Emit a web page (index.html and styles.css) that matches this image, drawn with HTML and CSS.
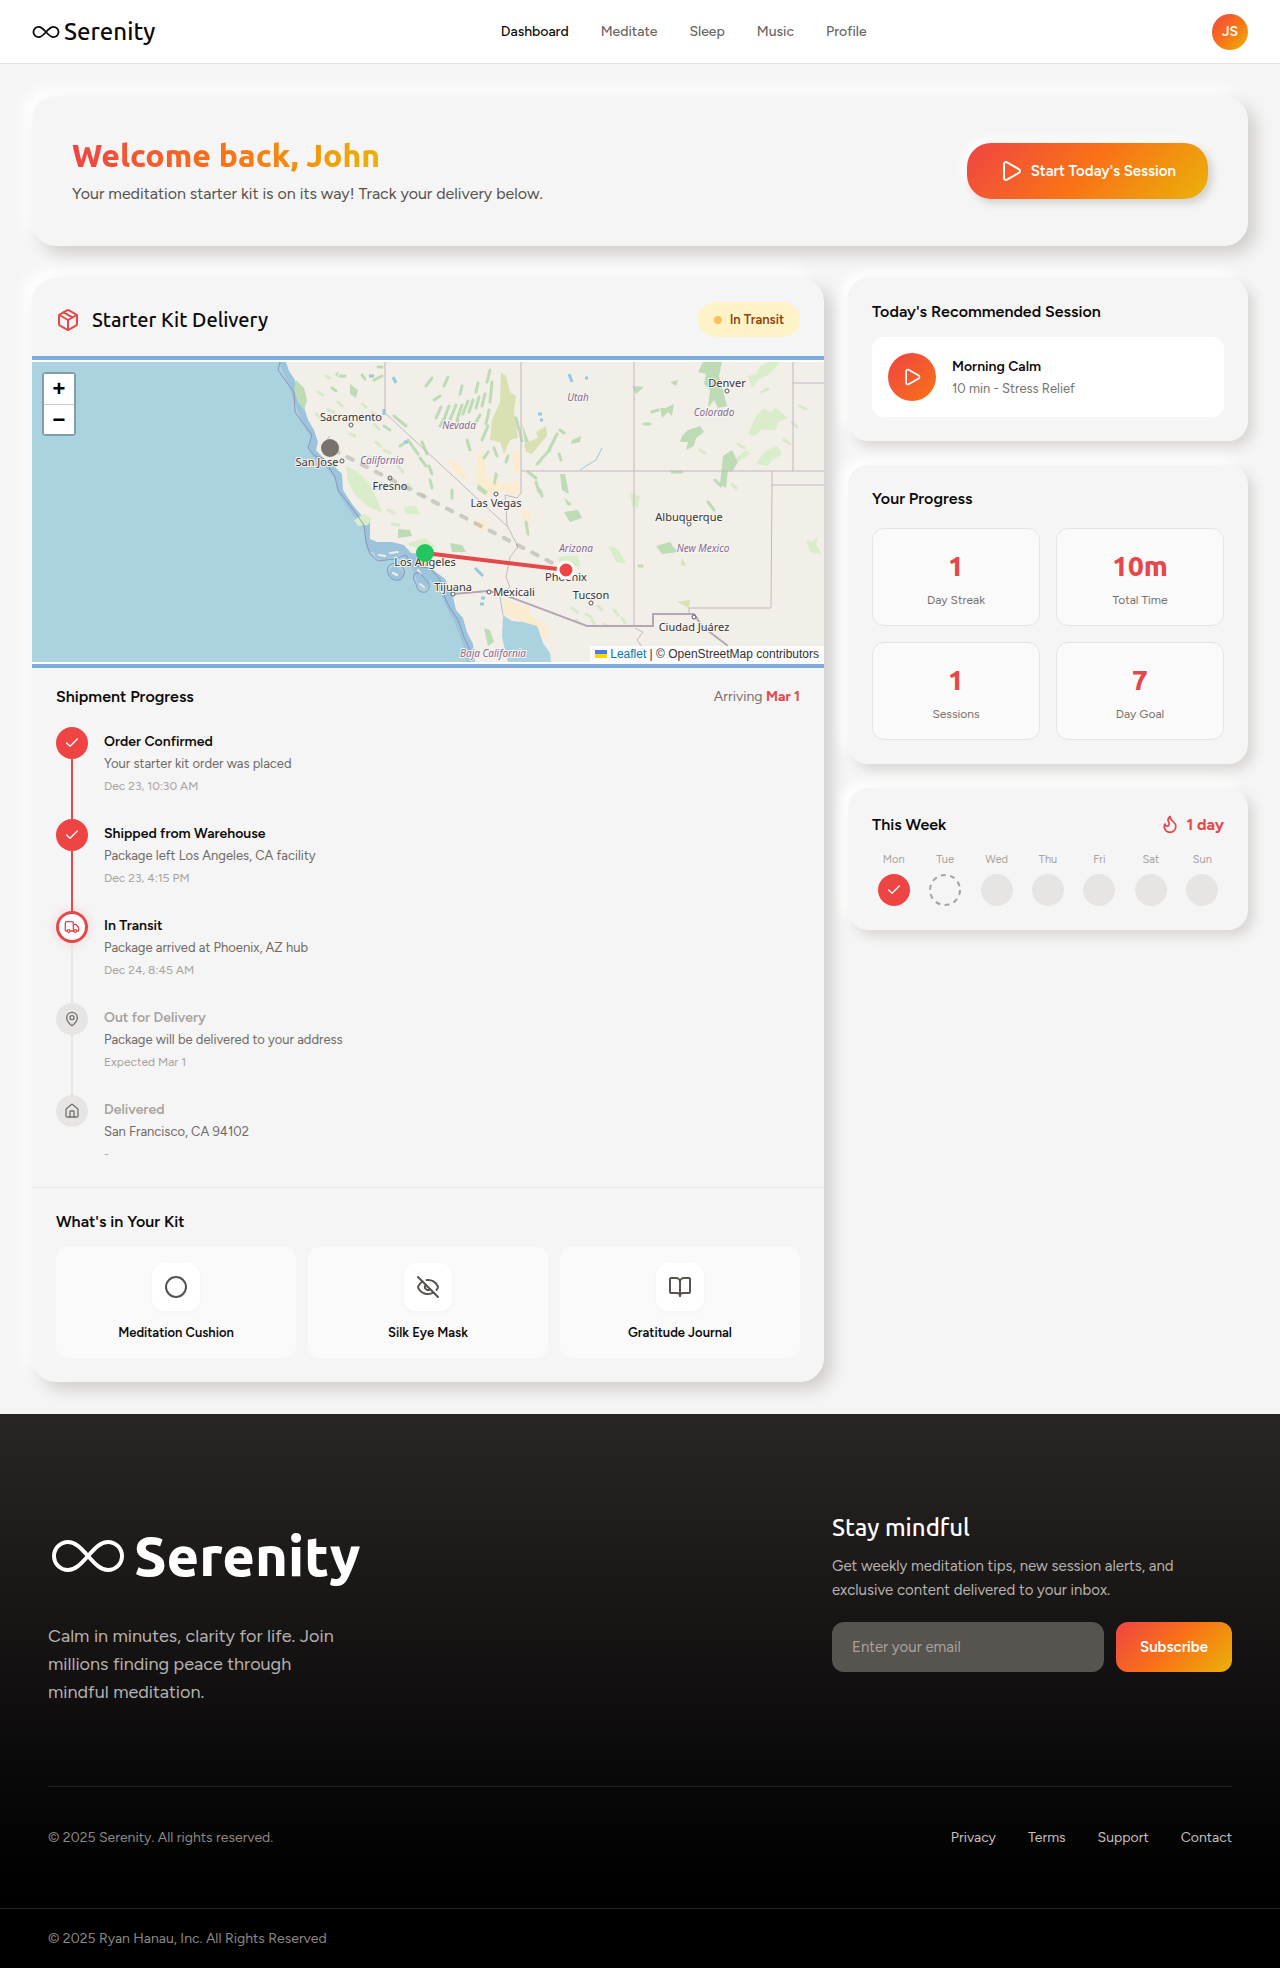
FILE: index.html
```html
<!DOCTYPE html>
<html lang="en">
<head>
    <meta charset="UTF-8">
    <meta name="viewport" content="width=device-width, initial-scale=1.0">
    <title>Serenity - Dashboard</title>
    <link rel="stylesheet" href="styles.css">
</head>
<body>
    <header class="navbar">
        <a class="logo" href="#">
            <svg class="logo-icon" viewBox="-2 0 76 38" aria-hidden="true"><path d="M36 19C28 10 23 5 16 5A14 14 0 0 0 16 33C23 33 28 28 36 19S49 5 56 5A14 14 0 0 1 56 33C49 33 44 28 36 19Z"/></svg>
            <span>Serenity</span>
        </a>
        <nav class="nav-links">
            <a class="active" href="#">Dashboard</a>
            <a href="#">Meditate</a>
            <a href="#">Sleep</a>
            <a href="#">Music</a>
            <a href="#">Profile</a>
        </nav>
        <button class="avatar" type="button">JS</button>
    </header>

    <main class="dashboard">
        <section class="hero">
            <div>
                <h1>Welcome back, John</h1>
                <p>Your meditation starter kit is on its way! Track your delivery below.</p>
            </div>
            <button class="start-btn" type="button">
                <svg class="icon icon-24" viewBox="0 0 24 24" aria-hidden="true"><path d="M5 5a2 2 0 0 1 3.008-1.728l11.997 6.998a2 2 0 0 1 .003 3.458l-12 7A2 2 0 0 1 5 19z"/></svg>
                Start Today's Session
            </button>
        </section>

        <div class="columns">
            <section class="card delivery">
                <div class="delivery-header">
                    <svg class="icon icon-24 red" viewBox="0 0 24 24" aria-hidden="true"><path d="M11 21.73a2 2 0 0 0 2 0l7-4A2 2 0 0 0 21 16V8a2 2 0 0 0-1-1.73l-7-4a2 2 0 0 0-2 0l-7 4A2 2 0 0 0 3 8v8a2 2 0 0 0 1 1.73z"/><path d="M12 22V12"/><path d="M3.3 7 12 12l8.700-5"/><path d="m7.500 4.270 9 5.150"/></svg>
                    <h2>Starter Kit Delivery</h2>
                    <span class="status"><i class="status-dot"></i>In Transit</span>
                </div>

                <div class="map">
                    <svg class="map-canvas" viewBox="0 0 792 300" preserveAspectRatio="xMinYMin slice" role="img" aria-label="Delivery route map">
                        <rect class="water" width="792" height="300"/>
                        <path class="shore" d="M254 0 L261 18 268 38 275 56 285 75 283 88 300 103 310 116 311 128 328 153 338 165 340 184 372 186 386 205 401 212 411 222 419 240 428 258 436 278 441 300"/>
                        <path class="isle-shore" d="M349 192 L366 188 M363 211 L366 213 M388 210 L392 220"/>
                        <path class="land" d="M254 0 L257 9 263 18 266 32 272 45 276 58 282 68 286 80 284 88 292 97 302 104 310 112 311 128 320 142 330 154 338 160 338 177 345 180 360 180 372 183 379 191 391 192 400 207 413 217 421 235 424 248 431 256 435 270 441 282 443 300 476 300 473 288 470 275 471 253 480 259 488 260 492 256 499 262 505 263 508 272 511 281 518 291 519 300 792 300 792 0 Z"/>
                        <path class="isle" d="M347 193 l6 1 M358 191 l8 -1 M361 211 l4 2 M386 208 l3 4 M388 222 l4 3"/>

                        <!-- dry farmland -->
                        <g class="sand">
                            <path d="M471 236 L480 240 497 245 498 253 512 262 517 270 513 279 505 264 488 259 472 251Z"/>
                            <path d="M446 92 L452 86 454 115 470 122 486 118 488 132 478 133 470 128 452 136 444 120Z"/>
                            <path d="M490 145 L499 151 497 165 491 158Z M414 95 L430 105 436 118 424 112Z M440 160 L458 158 450 172Z M480 88 L488 92 488 112 482 110Z"/>
                        </g>

                        <!-- forests and parks -->
                        <g class="park-light">
                            <path d="M314 104 L326 110 338 122 346 140 350 150 338 146 324 134 316 120Z"/>
                            <path d="M322 158 L332 152 340 156 336 163 326 164Z M372 145 L384 144 388 152 374 152Z M374 182 L392 176 404 184 394 190Z"/>
                            <path d="M724 54 L732 46 738 50 744 46 756 56 746 60 744 68 730 68 722 74 716 72Z M728 96 L734 88 746 84 750 92 740 98 736 104 724 102Z M704 96 L714 88 718 92 706 100Z M716 14 L724 12 728 4 738 0 748 0 738 12 726 18 720 26Z"/>
                            <path d="M576 184 L584 186 588 190 594 202 584 200Z M774 178 L780 180 786 174 784 182 790 192 778 190Z M526 195 L546 193 548 205 528 203Z M598 130 L608 134 606 146 600 144Z"/>
                        </g>
                        <g class="park-olive">
                            <path d="M469 10 L474 14 478 30 484 34 482 50 486 76 478 78 472 92 468 80 458 78 460 58 468 40Z"/>
                            <path d="M492 82 L506 76 504 70 514 64 515 74 508 82 500 92 494 90Z M645 240 L658 238 657 246Z M650 196 l4 8 -5 -1Z"/>
                        </g>
                        <g class="park">
                            <path d="M264 18 L272 26 275 38 272 48 266 40 262 28Z"/>
                            <path d="M671 0 L690 0 687 14 691 28 695 44 686 46 682 38 676 46 678 28 672 22 674 12 666 10Z M628 46 L634 46 642 42 640 54 636 50 630 56Z M650 74 L656 68 668 64 672 70 664 76 662 84 654 88 656 80 648 80Z"/>
                            <path d="M691 94 L700 88 706 100 700 110 696 108 694 126 688 122Z M624 184 L638 180 642 186 648 190 630 192Z M532 150 L546 148 550 156 538 160Z M528 112 L533 112 537 132 530 128Z M532 136 l8 6 -4 2Z"/>
                            <path d="M366 167 L378 168 380 174 366 176Z M418 181 L430 183 434 190 420 190Z M452 266 L458 268 462 280 456 284Z M318 22 L326 28 324 36 318 32Z M303 12 l4 -3 -2 6Z M600 24 l12 1 -8 7Z M638 20 l8 -2 -2 6Z"/>
                            <path d="M446 122 l10 8 -3 3 -8 -6Z M463 110 l3 2 -3 12 -2 -3Z M490 62 l7 18 -4 1Z M540 78 l9 -4 -1 6 -9 2Z"/>
                        </g>
                        <g class="ridges light">
                            <path d="M286 30 l5 3 M296 48 l6 2 M306 40 l4 4 M330 42 l4 3 M342 62 l5 5 M352 88 l6 3 M344 80 l4 4 M366 104 l5 6 M376 122 l4 5 M340 50 l5 3 M294 14 l4 2 M284 52 l5 5 M318 72 l5 2 M334 94 l5 2 M356 148 l6 3 M360 162 l7 1 M390 132 l4 3"/>
                            <path d="M540 246 l5 4 M554 252 l5 3 M566 244 l4 4 M582 248 l4 5 M590 256 l3 5 M572 262 l4 2 M560 258 l3 5 M544 258 l3 3 M700 122 l4 4 M760 60 l5 5 M768 44 l6 3 M730 30 l6 -3 M752 78 l6 4 M706 82 l6 4 M668 88 l5 3"/>
                        </g>
                        <g class="ridges">
                            <path d="M404 56 l5 -11 M411 60 l6 -16 M418 58 l6 -15 M425 58 l5 -15 M431 52 l5 -13 M437 50 l4 -12 M444 46 l3 -11 M443 62 l5 -9 M394 24 l6 -8 M402 38 l6 -4 M455 20 l3 -12 M458 40 l2 -20 M450 78 l6 -14 M462 86 l3 8 M435 78 l3 10 M428 32 l2 -8"/>
                            <path d="M408 64 l4 -7 M422 66 l4 -8 M450 44 l3 -12 M454 62 l3 -14 M444 30 l2 -9 M412 24 l4 -9 M484 56 l3 12 M488 70 l2 9 M452 96 l4 -6 M474 100 l2 -6"/>
                            <path d="M390 80 l5 12 M388 96 l6 8 M397 104 l3 8 M398 118 l2 8 M420 128 v8 M362 54 l12 10 M352 64 l6 4 M376 78 l10 14 M368 84 l6 -4 M342 18 l8 -4 M300 26 l4 3 M308 14 h5 M346 5 h4 M330 13 l3 4"/>
                            <path d="M517 88 l8 -16 M510 96 l8 -8 M527 92 l2 6 M505 102 l4 -4 M528 68 l4 3 M496 110 l8 6 M508 128 l2 6 M504 120 l3 10 M494 160 l2 12 M612 62 h6 M620 50 l6 -2 M676 140 l6 8 M683 118 l6 6 M640 110 h10 M607 204 h3"/>
                        </g>
                        <g class="lakes">
                            <path d="M537 12 l3 8 M553 16 h3 M361 15 l3 6 M352 47 v6 M372 80 h4 M506 52 h4 M508 58 h3 M443 206 l8 8 M449 236 h4 M448 242 h4 M337 14 h5"/>
                            <path class="river" d="M570 86 l-6 12 -10 6 -6 4 M298 74 l-6 8"/>
                        </g>

                        <!-- borders -->
                        <g class="borders">
                            <path d="M353 0 V51 L476 165 M489 0 V131 L485 136 473 133 474 145 475 163 486 185 478 195 474 215 478 225 468 235 471 253"/>
                            <path d="M489 109 H792 M602 0 V264 M761 0 V109 M761 21 H792 M740 109 V123 H792 M740 123 L739 246 H657 V252"/>
                            <path d="M603 266 l8 4 -6 8 6 8 -4 14"/>
                        </g>
                        <path class="country" d="M421 232 L456 229 470 232 555 264 H621 V252 H662 L670 264 696 284"/>
                        <path class="maritime" d="M248 0 L246 8 256 22 262 30 263 50 270 60 280 73 276 86 283 94 291 96 303 115 306 128 320 146 332 163 334 180 338 192 346 199 362 197 374 193 380 204 398 206 408 218 413 236 418 246 426 258 432 275 438 288"/>
                        <path class="maritime" d="M356 205 q4 -6 12 -2 q6 4 4 10 q-4 8 -12 4 q-6 -5 -4 -12Z M382 212 q6 -4 10 4 q10 8 2 14 q-8 2 -10 -8 q-4 -5 -2 -10Z"/>

                        <g class="towns">
                            <circle cx="319" cy="63" r="2"/>
                            <circle cx="310" cy="99" r="2"/>
                            <circle cx="358" cy="116" r="2"/>
                            <circle cx="464" cy="132" r="2"/>
                            <circle cx="421" cy="232" r="2"/>
                            <circle cx="457" cy="230" r="2"/>
                            <circle cx="695" cy="29" r="2"/>
                            <circle cx="657" cy="162" r="2"/>
                            <circle cx="559" cy="241" r="2"/>
                            <circle cx="662" cy="255" r="2"/>
                        </g>
                        <g class="city-names">
                            <text x="319" y="59">Sacramento</text>
                            <text x="285" y="104">San Jose</text>
                            <text x="358" y="128">Fresno</text>
                            <text x="464" y="145">Las Vegas</text>
                            <text x="393" y="204">Los Angeles</text>
                            <text x="421" y="229">Tijuana</text>
                            <text x="482" y="234">Mexicali</text>
                            <text x="534" y="219">Phoenix</text>
                            <text x="559" y="237">Tucson</text>
                            <text x="695" y="25">Denver</text>
                            <text x="657" y="159">Albuquerque</text>
                            <text x="662" y="269">Ciudad Juárez</text>
                        </g>
                        <g class="state-names">
                            <text x="350" y="102">California</text>
                            <text x="427" y="67">Nevada</text>
                            <text x="546" y="39">Utah</text>
                            <text x="682" y="54">Colorado</text>
                            <text x="544" y="190">Arizona</text>
                            <text x="671" y="190">New Mexico</text>
                            <text x="461" y="295">Baja California</text>
                        </g>

                        <!-- route and stops -->
                        <path class="route-left" d="M534 208 L298 86"/>
                        <path class="route-done" d="M393 191 L534 208"/>
                        <circle class="stop-home" cx="298" cy="86" r="9"/>
                        <circle class="stop-origin" cx="393" cy="191" r="9"/>
                        <circle class="stop-now" cx="534" cy="208" r="8"/>
                    </svg>
                    <div class="zoom-control">
                        <button type="button" aria-label="Zoom in">+</button>
                        <button type="button" aria-label="Zoom out">−</button>
                    </div>
                    <div class="attribution">
                        <svg class="flag" viewBox="0 0 12 8" aria-hidden="true"><path fill="#4c7be1" d="M0 0h12v4H0z"/><path fill="#ffd500" d="M0 4h12v4H0z"/></svg>
                        <a href="#">Leaflet</a> | © OpenStreetMap contributors
                    </div>
                </div>

                <div class="shipment">
                    <div class="shipment-header">
                        <h3>Shipment Progress</h3>
                        <p>Arriving <strong>Mar 1</strong></p>
                    </div>
                    <ol class="timeline">
                        <li class="step done">
                            <span class="node"><svg class="icon icon-16" viewBox="0 0 24 24" aria-hidden="true"><path d="M20 6 9 17l-5-5"/></svg></span>
                            <div>
                                <h4>Order Confirmed</h4>
                                <p>Your starter kit order was placed</p>
                                <time>Dec 23, 10:30 AM</time>
                            </div>
                        </li>
                        <li class="step done">
                            <span class="node"><svg class="icon icon-16" viewBox="0 0 24 24" aria-hidden="true"><path d="M20 6 9 17l-5-5"/></svg></span>
                            <div>
                                <h4>Shipped from Warehouse</h4>
                                <p>Package left Los Angeles, CA facility</p>
                                <time>Dec 23, 4:15 PM</time>
                            </div>
                        </li>
                        <li class="step current">
                            <span class="node"><svg class="icon icon-16" viewBox="0 0 24 24" aria-hidden="true"><path d="M14 18V6a2 2 0 0 0-2-2H4a2 2 0 0 0-2 2v11a1 1 0 0 0 1 1h2"/><path d="M15 18H9"/><path d="M19 18h2a1 1 0 0 0 1-1v-3.650a1 1 0 0 0-.22-.624l-3.480-4.350A1 1 0 0 0 17.520 8H14"/><circle cx="17" cy="18" r="2"/><circle cx="7" cy="18" r="2"/></svg></span>
                            <div>
                                <h4>In Transit</h4>
                                <p>Package arrived at Phoenix, AZ hub</p>
                                <time>Dec 24, 8:45 AM</time>
                            </div>
                        </li>
                        <li class="step pending">
                            <span class="node"><svg class="icon icon-16" viewBox="0 0 24 24" aria-hidden="true"><path d="M20 10c0 4.993-5.539 10.193-7.399 11.799a1 1 0 0 1-1.202 0C9.539 20.193 4 14.993 4 10a8 8 0 0 1 16 0"/><circle cx="12" cy="10" r="3"/></svg></span>
                            <div>
                                <h4>Out for Delivery</h4>
                                <p>Package will be delivered to your address</p>
                                <time>Expected Mar 1</time>
                            </div>
                        </li>
                        <li class="step pending">
                            <span class="node"><svg class="icon icon-16" viewBox="0 0 24 24" aria-hidden="true"><path d="M15 21v-8a1 1 0 0 0-1-1h-4a1 1 0 0 0-1 1v8"/><path d="M3 10a2 2 0 0 1 .709-1.528l7-5.999a2 2 0 0 1 2.582 0l7 5.999A2 2 0 0 1 21 10v9a2 2 0 0 1-2 2H5a2 2 0 0 1-2-2z"/></svg></span>
                            <div>
                                <h4>Delivered</h4>
                                <p>San Francisco, CA 94102</p>
                                <time>-</time>
                            </div>
                        </li>
                    </ol>
                </div>

                <div class="kit">
                    <h3>What's in Your Kit</h3>
                    <ul class="kit-items">
                        <li>
                            <span class="kit-icon"><svg class="icon icon-24" viewBox="0 0 24 24" aria-hidden="true"><circle cx="12" cy="12" r="10"/></svg></span>
                            Meditation Cushion
                        </li>
                        <li>
                            <span class="kit-icon"><svg class="icon icon-24" viewBox="0 0 24 24" aria-hidden="true"><path d="M10.733 5.076a10.744 10.744 0 0 1 11.205 6.575 1 1 0 0 1 0 .696 10.747 10.747 0 0 1-1.444 2.490"/><path d="M14.084 14.158a3 3 0 0 1-4.242-4.242"/><path d="M17.479 17.499a10.750 10.750 0 0 1-15.417-5.151 1 1 0 0 1 0-.696 10.750 10.750 0 0 1 4.446-5.143"/><path d="m2 2 20 20"/></svg></span>
                            Silk Eye Mask
                        </li>
                        <li>
                            <span class="kit-icon"><svg class="icon icon-24" viewBox="0 0 24 24" aria-hidden="true"><path d="M12 7v14"/><path d="M3 18a1 1 0 0 1-1-1V4a1 1 0 0 1 1-1h5a4 4 0 0 1 4 4 4 4 0 0 1 4-4h5a1 1 0 0 1 1 1v13a1 1 0 0 1-1 1h-6a3 3 0 0 0-3 3 3 3 0 0 0-3-3z"/></svg></span>
                            Gratitude Journal
                        </li>
                    </ul>
                </div>
            </section>

            <aside class="sidebar">
                <section class="card side-card">
                    <h3>Today's Recommended Session</h3>
                    <div class="session">
                        <button class="play-btn" type="button" aria-label="Play Morning Calm"><svg class="icon icon-20" viewBox="0 0 24 24" aria-hidden="true"><path d="M5 5a2 2 0 0 1 3.008-1.728l11.997 6.998a2 2 0 0 1 .003 3.458l-12 7A2 2 0 0 1 5 19z"/></svg></button>
                        <div class="session-info">
                            <h4>Morning Calm</h4>
                            <p>10 min - Stress Relief</p>
                        </div>
                    </div>
                </section>

                <section class="card side-card progress">
                    <h3>Your Progress</h3>
                    <div class="stats">
                        <div class="stat"><strong>1</strong><span>Day Streak</span></div>
                        <div class="stat"><strong>10m</strong><span>Total Time</span></div>
                        <div class="stat"><strong>1</strong><span>Sessions</span></div>
                        <div class="stat"><strong>7</strong><span>Day Goal</span></div>
                    </div>
                </section>

                <section class="card side-card">
                    <div class="week-header">
                        <h3>This Week</h3>
                        <span class="streak">
                            <svg class="icon icon-20" viewBox="0 0 24 24" aria-hidden="true"><path d="M8.500 14.500A2.500 2.500 0 0 0 11 12c0-1.380-.5-2-1-3-1.072-2.143-.224-4.054 2-6 .5 2.500 2 4.900 4 6.500 2 1.600 3 3.500 3 5.500a7 7 0 1 1-14 0c0-1.153.433-2.294 1-3a2.500 2.500 0 0 0 2.500 2.500z"/></svg>
                            1 day
                        </span>
                    </div>
                    <ul class="week">
                        <li>Mon<span class="day complete"><svg class="icon icon-16" viewBox="0 0 24 24" aria-hidden="true"><path d="M20 6 9 17l-5-5"/></svg></span></li>
                        <li>Tue<span class="day today"><svg class="ring" viewBox="0 0 32 32" aria-hidden="true"><circle cx="16" cy="16" r="15"/></svg></span></li>
                        <li>Wed<span class="day"></span></li>
                        <li>Thu<span class="day"></span></li>
                        <li>Fri<span class="day"></span></li>
                        <li>Sat<span class="day"></span></li>
                        <li>Sun<span class="day"></span></li>
                    </ul>
                </section>
            </aside>
        </div>
    </main>

    <footer class="footer">
        <div class="footer-main">
            <div class="footer-top">
                <div class="footer-brand">
                    <a class="footer-logo" href="#">
                        <svg class="footer-logo-icon" viewBox="-4 -1 80 40" aria-hidden="true"><path d="M36 19C28 10 23 5 16 5A14 14 0 0 0 16 33C23 33 28 28 36 19S49 5 56 5A14 14 0 0 1 56 33C49 33 44 28 36 19Z"/></svg>
                        <span>Serenity</span>
                    </a>
                    <p>Calm in minutes, clarity for life. Join millions finding peace through mindful meditation.</p>
                </div>
                <form class="newsletter">
                    <h2>Stay mindful</h2>
                    <p>Get weekly meditation tips, new session alerts, and exclusive content delivered to your inbox.</p>
                    <div class="newsletter-row">
                        <input type="email" placeholder="Enter your email" aria-label="Email address">
                        <button type="button">Subscribe</button>
                    </div>
                </form>
            </div>
            <div class="footer-bottom">
                <p>© 2025 Serenity. All rights reserved.</p>
                <nav class="footer-links">
                    <a href="#">Privacy</a>
                    <a href="#">Terms</a>
                    <a href="#">Support</a>
                    <a href="#">Contact</a>
                </nav>
            </div>
        </div>
        <div class="copyright">© 2025 Ryan Hanau, Inc. All Rights Reserved</div>
    </footer>
</body>
</html>
```
FILE: styles.css
```css
* {
    box-sizing: border-box;
}
body {
    margin: 0;
    background: #f5f5f5;
    color: #0c0a09;
    font-family: Figtree, Lato, sans-serif;
    font-size: 16px;
}
h1, h2, h3, h4, p, ul, ol {
    margin: 0;
    padding: 0;
}
ul, ol {
    list-style: none;
}
a {
    color: inherit;
    text-decoration: none;
}
button, input {
    font-family: inherit;
    border: none;
}
button {
    cursor: pointer;
}
h1, h2, .logo, .footer-logo, .stat strong {
    font-family: Ubuntu, "Noto Sans", sans-serif;
}
h3 {
    font-size: 16px;
    line-height: 19px;
    font-weight: 600;
}
h4 {
    font-size: 14px;
    line-height: 20px;
    font-weight: 600;
}

/* icons */
.icon {
    flex: none;
    fill: none;
    stroke: currentColor;
    stroke-width: 2;
    stroke-linecap: round;
    stroke-linejoin: round;
}
.icon-16 { width: 16px; height: 16px; }
.icon-20 { width: 20px; height: 20px; }
.icon-24 { width: 24px; height: 24px; }
.red { color: #e5484a; }

/* navbar */
.navbar {
    display: flex;
    align-items: center;
    justify-content: space-between;
    height: 64px;
    padding: 0 32px;
    background: #fff;
    border-bottom: 1px solid #e2e2e2;
}
.logo {
    display: flex;
    align-items: center;
    gap: 4px;
    font-size: 24px;
    line-height: 32px;
    font-weight: 500;
}
.logo-icon {
    width: 28px;
    height: 14px;
    fill: none;
    stroke: currentColor;
    stroke-width: 5;
}
.nav-links {
    display: flex;
    gap: 32px;
    font-size: 14px;
    font-weight: 500;
    color: #6b6763;
}
.nav-links .active {
    color: #0c0a09;
}
.avatar {
    width: 36px;
    height: 36px;
    padding: 0;
    border-radius: 50%;
    background: linear-gradient(135deg, #ef4444, #f97316 50%, #eab308);
    color: #fff;
    font-size: 14px;
    font-weight: 600;
}

/* cards */
.dashboard {
    padding: 32px;
}
.hero, .card {
    background: #f5f5f5;
    box-shadow: 8px 8px 16px #d1cfcd, -8px -8px 16px #fff;
}
.hero {
    display: flex;
    align-items: center;
    justify-content: space-between;
    height: 150px;
    padding: 0 40px;
    margin-bottom: 32px;
    border-radius: 24px;
}
.hero h1 {
    width: fit-content;
    font-size: 32px;
    line-height: 38px;
    font-weight: 800;
    background: linear-gradient(90deg, #ef4444, #f97316 50%, #eab308);
    background-clip: text;
    -webkit-background-clip: text;
    color: transparent;
}
.hero p {
    margin-top: 8px;
    line-height: 24px;
    color: #57534e;
}
.start-btn {
    display: flex;
    align-items: center;
    gap: 8px;
    height: 56px;
    padding: 0 32px;
    border-radius: 24px;
    background: linear-gradient(135deg, #ef4444, #f97316 50%, #eab308);
    box-shadow: 4px 4px 8px #d1cfcd, -4px -4px 8px #fff;
    color: #fff;
    font-size: 15px;
    font-weight: 600;
}
.columns {
    display: grid;
    grid-template-columns: minmax(0, 1fr) 400px;
    gap: 24px;
    align-items: start;
}
.card {
    border-radius: 20px;
}
.delivery {
    overflow: hidden;
    border-radius: 24px;
}
.delivery-header {
    display: flex;
    align-items: center;
    gap: 12px;
    padding: 24px;
    border-bottom: 1px solid #e7e5e4;
}
.delivery-header h2 {
    flex: 1;
    font-size: 20px;
    line-height: 24px;
    font-weight: 500;
}
.status {
    display: flex;
    align-items: center;
    gap: 8px;
    height: 35px;
    padding: 0 16px;
    border-radius: 18px;
    background: #fef3c7;
    color: #92400e;
    font-size: 13px;
    font-weight: 600;
}
.status-dot {
    width: 8px;
    height: 8px;
    border-radius: 50%;
    background: #fbbf5c;
}

/* map */
.map {
    position: relative;
    height: 300px;
    outline: 4px solid #7babdf;
    outline-offset: 2px;
    box-shadow: 0 0 0 2px #fff;
}
.map-canvas {
    display: block;
    width: 100%;
    height: 100%;
}
.water { fill: #aad3df; }
.land { fill: #f2efe9; }
.shore, .isle-shore {
    fill: none;
    stroke: #9cc4dc;
    stroke-width: 12;
    stroke-linejoin: round;
    stroke-linecap: round;
}
.isle {
    fill: none;
    stroke: #f2efe9;
    stroke-width: 2;
    stroke-linecap: round;
}
.sand { fill: #fbecd0; }
.park { fill: #bddbb4; }
.park-light { fill: #d9edca; }
.park-olive { fill: #d9e1b2; }
.ridges {
    fill: none;
    stroke: #bddbb4;
    stroke-width: 3;
    stroke-linecap: round;
}
.ridges.light {
    stroke: #d9e8cc;
}
.lakes {
    fill: none;
    stroke: #94c9e0;
    stroke-width: 3;
}
.lakes .river {
    stroke-width: 1;
}
.borders {
    fill: none;
    stroke: #c3b6c2;
    stroke-width: 1;
}
.country {
    fill: none;
    stroke: #b5a6b6;
    stroke-width: 2;
}
.maritime {
    fill: none;
    stroke: #8f93b8;
    stroke-width: 1;
}
.towns {
    fill: #fff;
    stroke: #555;
    stroke-width: 1;
}
.city-names, .state-names {
    font-family: "Noto Sans", sans-serif;
    font-size: 11px;
    text-anchor: middle;
    fill: #333;
    stroke: #f7f5f1;
    stroke-width: 2;
    paint-order: stroke;
}
.state-names {
    font-size: 10px;
    font-style: italic;
    fill: #876a92;
}
.route-left {
    stroke: #78716c;
    stroke-opacity: 0.3;
    stroke-width: 4;
    stroke-dasharray: 6 10;
    stroke-linecap: round;
}
.route-done {
    stroke: #e5484a;
    stroke-width: 4;
}
.stop-home { fill: #78716c; }
.stop-origin { fill: #22c55e; }
.stop-now {
    fill: #ef4444;
    stroke: #fff;
    stroke-width: 3;
}
.zoom-control {
    position: absolute;
    top: 10px;
    left: 10px;
    display: flex;
    flex-direction: column;
    border: 2px solid rgba(0, 0, 0, 0.25);
    border-radius: 4px;
    background-clip: padding-box;
}
.zoom-control button {
    width: 30px;
    height: 30px;
    padding: 0;
    background: #fff;
    color: #000;
    font: bold 22px "Liberation Sans", sans-serif;
    line-height: 30px;
}
.zoom-control button + button {
    border-top: 1px solid #ccc;
}
.attribution {
    position: absolute;
    right: 0;
    bottom: 0;
    padding: 0 5px;
    background: rgba(255, 255, 255, 0.8);
    color: #333;
    font-family: "Liberation Sans", sans-serif;
    font-size: 12px;
    line-height: 16px;
}
.attribution a {
    color: #0078a8;
}
.flag {
    width: 12px;
    height: 8px;
}

/* shipment timeline */
.shipment {
    padding: 24px;
}
.shipment-header {
    display: flex;
    align-items: center;
    justify-content: space-between;
    height: 21px;
    margin-bottom: 20px;
}
.shipment-header p {
    font-size: 14px;
    color: #78716c;
}
.shipment-header strong {
    color: #e5484a;
    font-weight: 700;
}
.step {
    position: relative;
    display: flex;
    gap: 16px;
    padding-bottom: 24px;
}
.step:last-child {
    padding-bottom: 0;
}
.step::before {
    content: "";
    position: absolute;
    left: 15px;
    top: 32px;
    bottom: 0;
    width: 2px;
    background: #e7e5e4;
}
.step.done::before {
    background: #e5484a;
}
.step:last-child::before {
    display: none;
}
.node {
    display: flex;
    flex: none;
    align-items: center;
    justify-content: center;
    width: 32px;
    height: 32px;
    border-radius: 50%;
    background: #e7e5e4;
    color: #78716c;
}
.done .node {
    background: #ef4444;
    color: #fff;
}
.current .node {
    background: #fff;
    border: 3px solid #e5484a;
    color: #e5484a;
    box-shadow: 0 0 12px rgba(239, 68, 68, 0.2);
}
.step h4 {
    padding-top: 5px;
}
.step p {
    margin-top: 2px;
    font-size: 13px;
    line-height: 20px;
    color: #6f6a66;
}
.step time {
    display: block;
    margin-top: 3px;
    font-size: 12px;
    line-height: 18px;
    color: #a8a29e;
}
.pending h4 {
    color: #a8a29e;
}

/* kit */
.kit {
    padding: 24px;
    border-top: 1px solid #e7e5e4;
}
.kit-items {
    display: grid;
    grid-template-columns: repeat(3, 1fr);
    gap: 12px;
    margin-top: 16px;
}
.kit-items li {
    display: flex;
    flex-direction: column;
    align-items: center;
    gap: 12px;
    padding: 16px;
    border-radius: 12px;
    background: #fafafa;
    font-size: 13px;
    line-height: 19px;
    font-weight: 600;
}
.kit-icon {
    display: flex;
    align-items: center;
    justify-content: center;
    width: 48px;
    height: 48px;
    border-radius: 12px;
    background: #fff;
    box-shadow: 0 2px 6px rgba(0, 0, 0, 0.03);
    color: #57534e;
}

/* sidebar */
.sidebar {
    display: flex;
    flex-direction: column;
    gap: 24px;
}
.side-card {
    padding: 24px;
    box-shadow: 6px 6px 12px #d9d7d5, -6px -6px 12px #fff;
}
.session {
    display: flex;
    align-items: center;
    gap: 16px;
    margin-top: 16px;
    padding: 16px;
    border-radius: 12px;
    background: #fff;
}
.session-info {
    padding-top: 2px;
}
.session p {
    margin-top: 2px;
    font-size: 13px;
    line-height: 20px;
    color: #78716c;
}
.play-btn {
    display: flex;
    align-items: center;
    justify-content: center;
    width: 48px;
    height: 48px;
    padding: 0;
    border-radius: 50%;
    background: linear-gradient(135deg, #ef4444, #f97316);
    color: #fff;
}
.stats {
    display: grid;
    grid-template-columns: 1fr 1fr;
    gap: 16px;
    margin-top: 20px;
}
.stat {
    display: flex;
    flex-direction: column;
    gap: 8px;
    padding: 20px 16px 16px;
    border: 1px solid #e7e5e4;
    border-radius: 12px;
    background: #fafafa;
    text-align: center;
}
.stat strong {
    font-size: 28px;
    line-height: 34px;
    font-weight: 800;
    color: #e5484a;
}
.stat span {
    font-size: 12px;
    line-height: 18px;
    color: #78716c;
}
.week-header {
    display: flex;
    align-items: center;
    justify-content: space-between;
    height: 24px;
    margin-bottom: 16px;
}
.streak {
    display: flex;
    align-items: center;
    gap: 6px;
    color: #e5484a;
    font-weight: 700;
}
.week {
    display: grid;
    grid-template-columns: repeat(7, 1fr);
    gap: 8px;
}
.week li {
    display: flex;
    flex-direction: column;
    align-items: center;
    gap: 6px;
    font-size: 11px;
    line-height: 16px;
    color: #a8a29e;
}
.day {
    display: flex;
    align-items: center;
    justify-content: center;
    width: 32px;
    height: 32px;
    border-radius: 50%;
    background: #e7e5e4;
}
.day.complete {
    background: #ef4444;
    color: #fff;
}
.day.today {
    background: none;
}
.ring {
    width: 32px;
    height: 32px;
    fill: none;
    stroke: #a8a29e;
    stroke-width: 2;
    stroke-dasharray: 5 4.425;
}

/* footer */
.footer {
    background: linear-gradient(#292524, #000 86%);
    color: #b5b2af;
}
.footer-main {
    padding: 96px 48px 60px;
}
.footer-top {
    display: flex;
    justify-content: space-between;
    height: 276px;
}
.footer-logo {
    display: flex;
    align-items: center;
    gap: 6px;
    margin-top: 12px;
    color: #fff;
    font-size: 56px;
    line-height: 68px;
    font-weight: 800;
}
.footer-logo-icon {
    width: 80px;
    height: 40px;
    fill: none;
    stroke: currentColor;
    stroke-width: 4;
}
.footer-brand p {
    max-width: 300px;
    margin-top: 32px;
    font-size: 18px;
    line-height: 28px;
}
.newsletter {
    width: 400px;
}
.newsletter h2 {
    color: #fff;
    font-size: 24px;
    line-height: 36px;
    font-weight: 500;
}
.newsletter p {
    margin-top: 8px;
    font-size: 15px;
    line-height: 24px;
}
.newsletter-row {
    display: flex;
    gap: 12px;
    margin-top: 20px;
}
.newsletter input {
    flex: 1;
    min-width: 0;
    height: 50px;
    padding: 0 20px;
    border-radius: 12px;
    background: #57534e;
    color: #fff;
    font-size: 15px;
}
.newsletter input::placeholder {
    color: #a8a29e;
}
.newsletter button {
    width: 116px;
    height: 50px;
    padding: 0;
    border-radius: 12px;
    background: linear-gradient(135deg, #ef4444, #f97316 50%, #eab308);
    color: #fff;
    font-size: 15px;
    font-weight: 600;
}
.footer-bottom {
    display: flex;
    align-items: center;
    justify-content: space-between;
    padding-top: 40px;
    border-top: 1px solid #221f1e;
    font-size: 14px;
    line-height: 21px;
    color: #8d8884;
}
.footer-links {
    display: flex;
    gap: 32px;
    color: #c4c1be;
}
.copyright {
    padding: 20px 48px;
    border-top: 1px solid #221f1e;
    background: #000;
    font-size: 14px;
    line-height: 19px;
    color: #8d8884;
}
```
